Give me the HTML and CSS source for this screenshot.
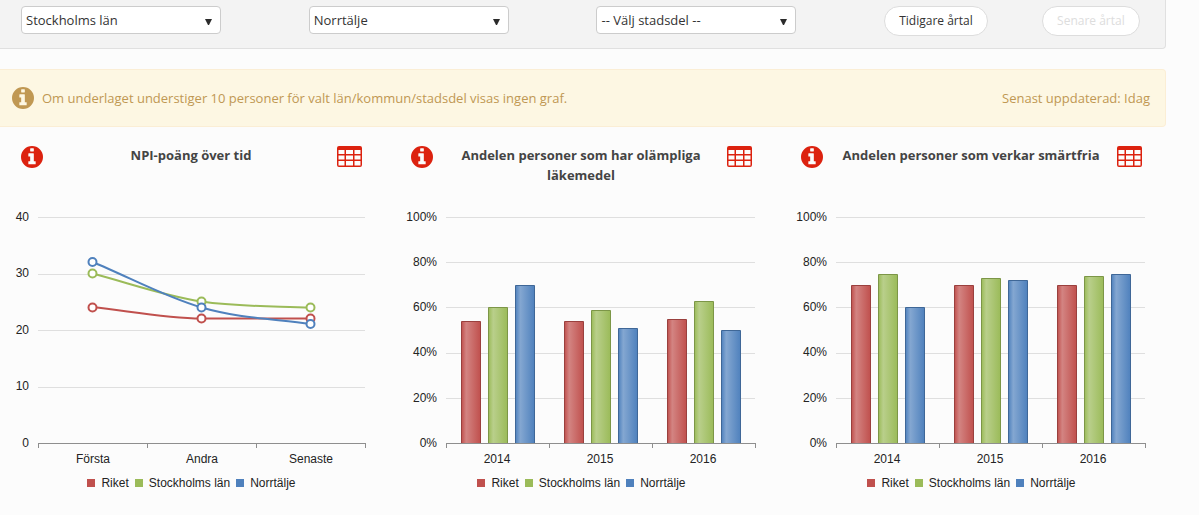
FILE: index.html
```html
<!DOCTYPE html>
<html lang="sv">
<head>
<meta charset="utf-8">
<meta name="viewport" content="width=device-width, initial-scale=1">
<title>NPI-poäng och läkemedel</title>
<link rel="stylesheet" href="styles.css">
</head>
<body>
<svg class="defs" aria-hidden="true">
  <defs>
    <symbol id="icon-info" viewBox="0 0 1536 1536">
      <path fill="currentColor" fill-rule="evenodd" d="M768 0a768 768 0 1 0 0 1536a768 768 0 1 0 0-1536zM1024 1248v-160q0-14-9-23t-23-9h-96V544q0-14-9-23t-23-9H544q-14 0-23 9t-9 23v160q0 14 9 23t23 9h96v320h-96q-14 0-23 9t-9 23v160q0 14 9 23t23 9h448q14 0 23-9t9-23zM896 352V192q0-14-9-23t-23-9H672q-14 0-23 9t-9 23v160q0 14 9 23t23 9h192q14 0 23-9t9-23z"/>
    </symbol>
    <symbol id="icon-table" viewBox="0 0 25 21">
      <path fill="currentColor" fill-rule="evenodd" d="M2 0h21a2 2 0 0 1 2 2v17a2 2 0 0 1-2 2H2a2 2 0 0 1-2-2V2a2 2 0 0 1 2-2zM1.500 4v4h6V4zM9 4v4h7V4zM17.500 4v4h6V4zM1.500 9.500v4h6v-4zM9 9.500v4h7v-4zM17.500 9.500v4h6v-4zM1.500 15v4.500h6V15zM9 15v4.500h7V15zM17.500 15v4.500h6V15z"/>
    </symbol>
    <linearGradient id="red"><stop offset="0" stop-color="#c0504d"/><stop offset=".25" stop-color="#d38482"/><stop offset="1" stop-color="#c0504d"/></linearGradient>
    <linearGradient id="green"><stop offset="0" stop-color="#9bbb59"/><stop offset=".25" stop-color="#b9cf8b"/><stop offset="1" stop-color="#9bbb59"/></linearGradient>
    <linearGradient id="blue"><stop offset="0" stop-color="#4f81bd"/><stop offset=".25" stop-color="#84a7d1"/><stop offset="1" stop-color="#4f81bd"/></linearGradient>
  </defs>
</svg>

<main class="page">
  <form class="filters">
    <div class="select">
      <select aria-label="Län"><option>Stockholms län</option></select>
      <svg class="arrow" viewBox="0 0 7 6" aria-hidden="true"><path d="M0 0h7L4 6H3z"/></svg>
    </div>
    <div class="select">
      <select aria-label="Kommun"><option>Norrtälje</option></select>
      <svg class="arrow" viewBox="0 0 7 6" aria-hidden="true"><path d="M0 0h7L4 6H3z"/></svg>
    </div>
    <div class="select">
      <select aria-label="Stadsdel"><option>-- Välj stadsdel --</option></select>
      <svg class="arrow" viewBox="0 0 7 6" aria-hidden="true"><path d="M0 0h7L4 6H3z"/></svg>
    </div>
    <button class="pill" type="button">Tidigare årtal</button>
    <button class="pill" type="button" disabled>Senare årtal</button>
  </form>

  <div class="notice">
    <svg class="info"><use href="#icon-info"/></svg>
    <span class="notice-text">Om underlaget understiger 10 personer för valt län/kommun/stadsdel visas ingen graf.</span>
    <span>Senast uppdaterad: Idag</span>
  </div>

  <div class="charts">
    <section class="panel">
      <header class="panel-head">
        <button class="icon-button" type="button" aria-label="Information"><svg class="info"><use href="#icon-info"/></svg></button>
        <h2 class="title">NPI-poäng över tid</h2>
        <button class="icon-button" type="button" aria-label="Visa tabell"><svg class="table"><use href="#icon-table"/></svg></button>
      </header>
      <svg class="plot" viewBox="0 0 390 270" role="img" aria-label="NPI-poäng över tid">
        <path class="grid" d="M38 17.500H365M38 74.500H365M38 130.500H365M38 187.500H365"/>
        <path class="axis" d="M38 243.500H366M38.500 243v5M147.500 243v5M256.500 243v5M365.500 243v5"/>
        <g class="scale"><text x="29" y="21">40</text><text x="29" y="77">30</text><text x="29" y="134">20</text><text x="29" y="190">10</text><text x="29" y="247">0</text></g>
        <g class="category"><text x="93" y="263">Första</text><text x="202" y="263">Andra</text><text x="311" y="263">Senaste</text></g>
        <g class="line red"><path d="M92.500 107C129 111 165 118 201.500 118.500H310.500"/><circle cx="92.500" cy="107.500" r="4"/><circle cx="201.500" cy="118.500" r="4"/><circle cx="310.500" cy="118.500" r="4"/></g>
        <g class="line green"><path d="M92.500 73.500C129 83 165 96 201.500 101.500C238 107 274 106 310.500 107.500"/><circle cx="92.500" cy="73.500" r="4"/><circle cx="201.500" cy="101.500" r="4"/><circle cx="310.500" cy="107.500" r="4"/></g>
        <g class="line blue"><path d="M92.500 62C129 77 165 97 201.500 107.500C238 118 274 119 310.500 124"/><circle cx="92.500" cy="62" r="4"/><circle cx="201.500" cy="107.500" r="4"/><circle cx="310.500" cy="124" r="4"/></g>
      </svg>
      <ul class="legend"><li class="red">Riket</li><li class="green">Stockholms län</li><li class="blue">Norrtälje</li></ul>
    </section>

    <section class="panel">
      <header class="panel-head">
        <button class="icon-button" type="button" aria-label="Information"><svg class="info"><use href="#icon-info"/></svg></button>
        <h2 class="title">Andelen personer som har olämpliga läkemedel</h2>
        <button class="icon-button" type="button" aria-label="Visa tabell"><svg class="table"><use href="#icon-table"/></svg></button>
      </header>
      <svg class="plot" viewBox="0 0 390 270" role="img" aria-label="Andelen personer som har olämpliga läkemedel">
        <path class="grid" d="M56 17.500H365M56 62.500H365M56 107.500H365M56 153.500H365M56 198.500H365"/>
        <g class="scale"><text x="47" y="21">100%</text><text x="47" y="66">80%</text><text x="47" y="111">60%</text><text x="47" y="156">40%</text><text x="47" y="202">20%</text><text x="47" y="247">0%</text></g>
        <g class="bar red"><path d="M71.500 243V121.500h19V243"/><path d="M174.500 243V121.500h19V243"/><path d="M277.500 243V119.500h19V243"/></g>
        <g class="bar green"><path d="M98.500 243V107.500h19V243"/><path d="M201.500 243V110.500h19V243"/><path d="M304.500 243V101.500h19V243"/></g>
        <g class="bar blue"><path d="M125.500 243V85.500h19V243"/><path d="M228.500 243V128.500h19V243"/><path d="M331.500 243V130.500h19V243"/></g>
        <path class="axis" d="M56 243.500H366M56.500 243v5M159.500 243v5M262.500 243v5M365.500 243v5"/>
        <g class="category"><text x="107" y="263">2014</text><text x="210" y="263">2015</text><text x="313" y="263">2016</text></g>
      </svg>
      <ul class="legend"><li class="red">Riket</li><li class="green">Stockholms län</li><li class="blue">Norrtälje</li></ul>
    </section>

    <section class="panel">
      <header class="panel-head">
        <button class="icon-button" type="button" aria-label="Information"><svg class="info"><use href="#icon-info"/></svg></button>
        <h2 class="title">Andelen personer som verkar smärtfria</h2>
        <button class="icon-button" type="button" aria-label="Visa tabell"><svg class="table"><use href="#icon-table"/></svg></button>
      </header>
      <svg class="plot" viewBox="0 0 390 270" role="img" aria-label="Andelen personer som verkar smärtfria">
        <path class="grid" d="M56 17.500H365M56 62.500H365M56 107.500H365M56 153.500H365M56 198.500H365"/>
        <g class="scale"><text x="47" y="21">100%</text><text x="47" y="66">80%</text><text x="47" y="111">60%</text><text x="47" y="156">40%</text><text x="47" y="202">20%</text><text x="47" y="247">0%</text></g>
        <g class="bar red"><path d="M71.500 243V85.500h19V243"/><path d="M174.500 243V85.500h19V243"/><path d="M277.500 243V85.500h19V243"/></g>
        <g class="bar green"><path d="M98.500 243V74.500h19V243"/><path d="M201.500 243V78.500h19V243"/><path d="M304.500 243V76.500h19V243"/></g>
        <g class="bar blue"><path d="M125.500 243V107.500h19V243"/><path d="M228.500 243V80.500h19V243"/><path d="M331.500 243V74.500h19V243"/></g>
        <path class="axis" d="M56 243.500H366M56.500 243v5M159.500 243v5M262.500 243v5M365.500 243v5"/>
        <g class="category"><text x="107" y="263">2014</text><text x="210" y="263">2015</text><text x="313" y="263">2016</text></g>
      </svg>
      <ul class="legend"><li class="red">Riket</li><li class="green">Stockholms län</li><li class="blue">Norrtälje</li></ul>
    </section>
  </div>
</main>
</body>
</html>
```
FILE: styles.css
```css
* { box-sizing: border-box; }

body {
  margin: 0;
  background: #fcfcfc;
  color: #333;
  font: 13px/20px "Open Sans", sans-serif;
}

.defs { position: absolute; width: 0; height: 0; }

.page { padding-right: 29px; }

.filters {
  display: grid;
  grid-template-columns: repeat(3, minmax(0, 288fr)) 158fr 123fr;
  align-items: start;
  justify-items: start;
  margin-right: 4px;
  padding: 6px 0 12px 21px;
  background: #f3f3f3;
  border: solid #e0e0e0;
  border-width: 0 1px 1px 0;
  border-radius: 0 0 4px 0;
}

.select {
  display: grid;
  align-items: center;
  width: 200px;
  max-width: 90%;
}

.select select,
.arrow { grid-area: 1 / 1; }

.select select {
  appearance: none;
  width: 100%;
  height: 28px;
  padding: 0 24px 0 4px;
  background: #fff;
  border: 1px solid #ccc;
  border-radius: 4px;
  color: #333;
  font: inherit;
}

.arrow {
  justify-self: end;
  width: 7px;
  height: 6px;
  margin: 3px 9px 0 0;
  fill: #2b2b2b;
  pointer-events: none;
}

.pill {
  height: 30px;
  padding: 0 14px;
  background: #fff;
  border: 1px solid #ddd;
  border-radius: 15px;
  color: #333;
  font: 12px/20px "Open Sans", sans-serif;
  white-space: nowrap;
}

.pill:disabled { color: #ddd; }

.notice {
  display: flex;
  align-items: center;
  gap: 8px;
  min-height: 58px;
  margin: 20px 4px 0 0;
  padding: 8px 15px 8px 12px;
  background: #fdf7e3;
  border: solid #fbeed5;
  border-width: 1px 1px 1px 0;
  border-radius: 0 4px 4px 0;
  color: #c09853;
}

.notice-text { flex: 1; }

.info { flex: none; display: block; width: 22px; height: 22px; }
.table { display: block; width: 25px; height: 21px; }

.charts {
  display: grid;
  grid-template-columns: repeat(3, minmax(0, 1fr));
  padding-top: 18px;
}

.panel-head {
  display: flex;
  align-items: flex-start;
  gap: 8px;
  min-height: 55px;
  padding: 0 28px 0 21px;
}

.title {
  flex: 1;
  margin: 0;
  padding-left: 2px;
  color: #444;
  font-size: 13px;
  line-height: 20px;
  text-align: center;
}

.icon-button {
  padding: 1px 0 0;
  background: none;
  border: 0;
  color: #dc220f;
}

.plot {
  display: block;
  width: 100%;
  height: auto;
  fill: #232323;
  font: 12px "Liberation Sans", Arial, sans-serif;
}

.grid { stroke: #dfdfdf; }
.axis { stroke: #8e8e8e; fill: none; }
.scale { text-anchor: end; }
.category { text-anchor: middle; }

.line { stroke-width: 2; }
.line path { fill: none; }
.line circle { fill: #fff; }
.line.red { stroke: #c0504d; }
.line.green { stroke: #9bbb59; }
.line.blue { stroke: #4f81bd; }

.bar.red { fill: url(#red); stroke: #9a403e; }
.bar.green { fill: url(#green); stroke: #7c9647; }
.bar.blue { fill: url(#blue); stroke: #3f6797; }

.legend {
  display: flex;
  flex-wrap: wrap;
  justify-content: center;
  gap: 6px;
  margin: 0;
  padding: 5px 7px 0 0;
  list-style: none;
  color: #232323;
  font: 12px/16px "Liberation Sans", Arial, sans-serif;
}

.legend li { display: flex; align-items: center; gap: 6px; }
.legend li::before { content: ""; width: 8px; height: 8px; }
.legend .red::before { background: #c0504d; }
.legend .green::before { background: #9bbb59; }
.legend .blue::before { background: #4f81bd; }
```
